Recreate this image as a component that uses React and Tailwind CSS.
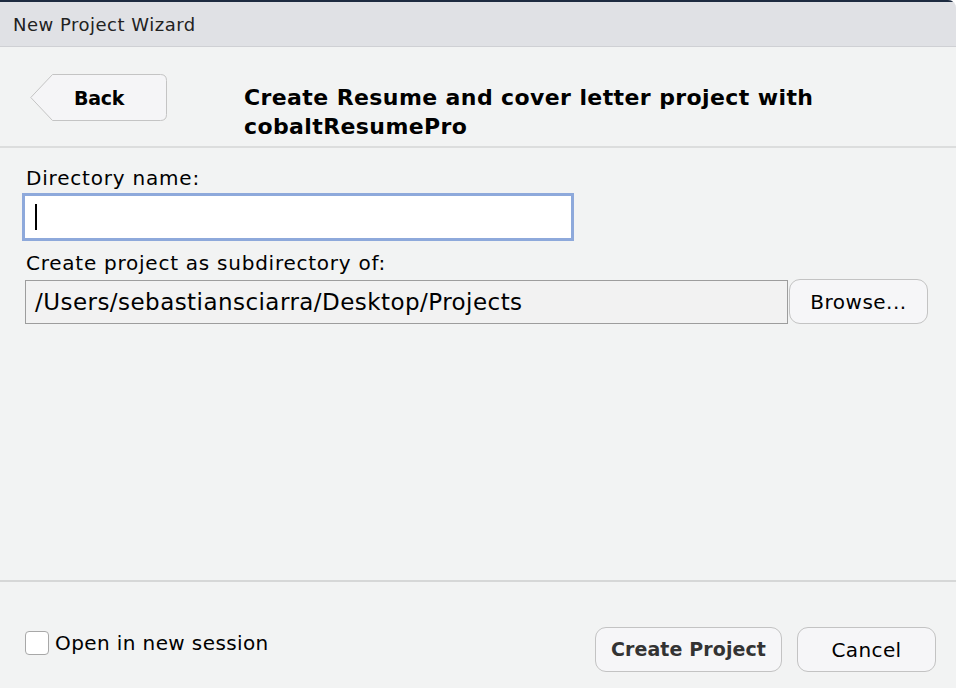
export default function App() {
  return (
    <div className="w-[956px] h-[688px] bg-[#f2f3f3] flex flex-col overflow-hidden rounded-tr-[8px] font-['DejaVu_Sans',sans-serif] text-black">
      <div className="h-[47px] shrink-0 bg-[#e0e1e5] border-t-2 border-[#1d2b40] border-b border-b-[#cfd0d4] flex items-center pl-[13px]">
        <span className="text-[18px] text-[#222] tracking-[0.5px] mt-[1px]">New Project Wizard</span>
      </div>
      <div className="h-[101px] shrink-0 flex items-start border-b-2 border-[#dcdddd]">
        <div className="relative ml-[30px] mt-[27px] w-[137px] h-[47px]">
          <svg width="137" height="47" viewBox="0 0 137 47" className="absolute inset-0">
            <path d="M22.5 0.5 H130.5 Q136.5 0.5 136.5 6.5 V40.5 Q136.5 46.5 130.5 46.5 H22.5 L0.8 23.5 Z" fill="#f5f5f7" stroke="#c4c4c4" strokeWidth="1" />
          </svg>
          <span className="absolute left-[44px] top-[10px] text-[19px] font-bold tracking-[-0.3px]">Back</span>
        </div>
        <div className="ml-[77px] mt-[36px] text-[22px] font-bold leading-[29px] tracking-[0.4px]">
          Create Resume and cover letter project with<br />cobaltResumePro
        </div>
      </div>
      <div className="flex-1 flex flex-col px-[22px]">
        <div className="mt-[18px] ml-[4px] text-[20px] leading-[25px] tracking-[0.8px]">Directory name:</div>
        <div className="mt-[2px] w-[552px] h-[48px] bg-white border-[3px] border-[#8ea9db] flex items-center pl-[10px]">
          <div className="w-[2px] h-[26px] bg-black" />
        </div>
        <div className="mt-[10px] ml-[4px] text-[20px] leading-[25px] tracking-[0.75px]">Create project as subdirectory of:</div>
        <div className="mt-[3px] flex items-center">
          <div className="ml-[3px] w-[763px] h-[44px] bg-[#f2f2f2] border border-[#9d9d9d] flex items-center pl-[9px] text-[23px] tracking-[0.45px]">
            <span className="mt-[2px]">/Users/sebastiansciarra/Desktop/Projects</span>
          </div>
          <div className="ml-[1px] w-[139px] h-[45px] rounded-[11px] bg-[#f6f6f8] border border-[#c3c3c3] flex items-center justify-center text-[20px] tracking-[0.5px]">
            Browse...
          </div>
        </div>
      </div>
      <div className="h-[2px] bg-[#d6d7d7] shrink-0" />
      <div className="h-[106px] shrink-0 flex items-start">
        <div className="flex items-center ml-[25px] mt-[46px]">
          <div className="w-[24px] h-[24px] rounded-[4px] bg-white border border-[#a8a8a8]" />
          <span className="ml-[6px] text-[20px] tracking-[0.4px]">Open in new session</span>
        </div>
        <div className="ml-auto mt-[45px] mr-[20px] flex gap-[15px]">
          <div className="w-[187px] h-[45px] rounded-[11px] bg-[#f6f6f8] border border-[#c3c3c3] flex items-center justify-center text-[19px] font-bold text-[#333] tracking-[0.1px]">Create Project</div>
          <div className="w-[139px] h-[45px] rounded-[11px] bg-[#f6f6f8] border border-[#c3c3c3] flex items-center justify-center text-[20px] tracking-[0.4px]">Cancel</div>
        </div>
      </div>
    </div>
  );
}
